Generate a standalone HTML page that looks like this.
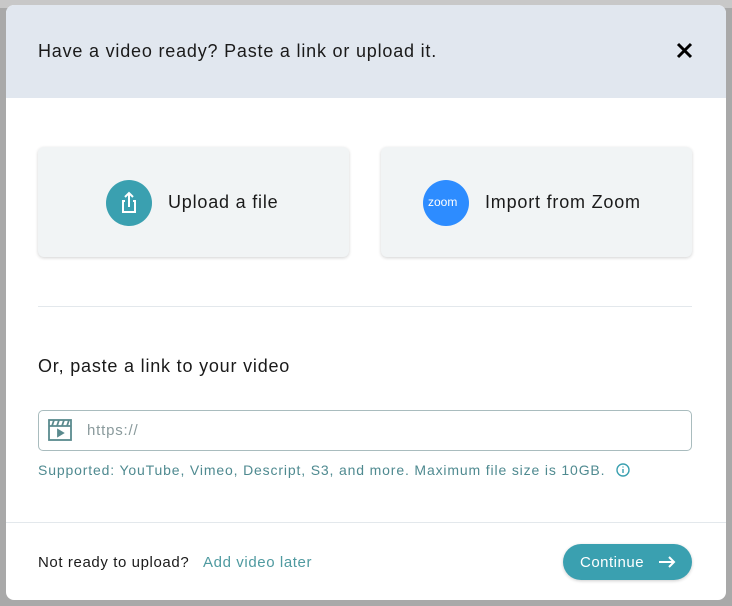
<!DOCTYPE html>
<html><head><style>
*{box-sizing:border-box;margin:0;padding:0}
body{width:732px;height:606px;overflow:hidden;background:#a9a9a9;font-family:"Liberation Sans",sans-serif;position:relative;letter-spacing:0.8px}
.bgtop{position:absolute;left:0;top:0;width:732px;height:8px;background:#c8c8c8}
.modal{position:absolute;left:6px;top:5px;width:720px;height:595px;background:#fff;border-radius:8px;overflow:hidden}
.hdr{position:absolute;left:0;top:0;width:720px;height:93px;background:#e1e7ef}
.hdr h1{position:absolute;left:32px;top:36px;font-size:18px;font-weight:normal;color:#1a1a1a}
.x{position:absolute;left:670px;top:37px}
.card{position:absolute;top:142px;width:311px;height:110px;background:#f1f4f5;border-radius:6px;box-shadow:0 1px 3px rgba(0,0,0,.18)}
.card .ic{position:absolute;left:68px;top:33px;width:46px;height:46px;border-radius:50%}
.card span{position:absolute;top:45px;font-size:18px;color:#1a1a1a}
.line{position:absolute;height:1px;background:#e3e8ec}
.or{position:absolute;left:32px;top:351px;font-size:18px;color:#1a1a1a}
.inp{position:absolute;left:32px;top:405px;width:654px;height:41px;border:1.5px solid #a9bcbe;border-radius:5px}
.inp span{position:absolute;left:48px;top:11px;font-size:15px;color:#8a9a9c}
.sup{position:absolute;left:32px;top:457px;font-size:14px;color:#4f8a90;letter-spacing:0.85px}
.ft{position:absolute;left:32px;top:549px;font-size:15px;color:#1a1a1a;letter-spacing:0.6px}
.ft a{color:#4f9aa0;margin-left:9px;letter-spacing:0.6px}
.btn{position:absolute;left:557px;top:539px;width:129px;height:36px;border-radius:18px;background:#3aa0b0;color:#fff;font-size:15px;box-shadow:0 1px 3px rgba(0,0,0,.2)}
.btn span{position:absolute;left:17px;top:10px;letter-spacing:0.5px}
</style></head><body>
<div class="bgtop"></div>
<div class="modal">
<div class="hdr"><h1>Have a video ready? Paste a link or upload it.</h1>
<svg class="x" width="17" height="17" viewBox="0 0 17 17"><path d="M2 2L15 15M15 2L2 15" stroke="#000" stroke-width="3"/></svg></div>
<div class="card" style="left:32px"><div class="ic" style="background:#3aa0b0">
<svg width="46" height="46" viewBox="0 0 46 46" fill="none" stroke="#fff" stroke-width="2"><path d="M19 21h-2v11h12V21h-2"/><path d="M23 27V13M19 17l4-4 4 4"/></svg></div><span style="left:130px">Upload a file</span></div>
<div class="card" style="left:375px"><div class="ic" style="background:#2d8cff;left:42px"><span style="position:absolute;left:5px;top:15px;font-size:12px;color:#fff;font-weight:normal;letter-spacing:0">zoom</span></div><span style="left:104px">Import from Zoom</span></div>
<div class="line" style="left:32px;top:301px;width:654px"></div>
<div class="or">Or, paste a link to your video</div>
<div class="inp"><svg style="position:absolute;left:8px;top:7px" width="26" height="24" viewBox="0 0 26 24" fill="none" stroke="#5a8a8e" stroke-width="1.8"><rect x="2" y="2" width="22" height="20"/><path d="M2 8h22M7 2l-2 6M12 2l-2 6M17 2l-2 6M22 2l-2 6"/><path d="M11 12v6l5-3z" fill="#5a8a8e"/></svg><span>https://</span></div>
<div class="sup">Supported: YouTube, Vimeo, Descript, S3, and more. Maximum file size is 10GB. <svg style="vertical-align:-2px;margin-left:6px" width="14" height="14" viewBox="0 0 14 14" fill="none" stroke="#3aa0b0" stroke-width="1.4"><circle cx="7" cy="7" r="6"/><path d="M7 6v4M7 3.5v1"/></svg></div>
<div class="line" style="left:0;top:517px;width:720px"></div>
<div class="ft">Not ready to upload? <a>Add video later</a></div>
<div class="btn"><span>Continue</span><svg style="position:absolute;left:95px;top:12px" width="18" height="12" viewBox="0 0 18 12" fill="none" stroke="#fff" stroke-width="2"><path d="M1 6h15M11 1l5 5-5 5"/></svg></div>
</div>
</body></html>
